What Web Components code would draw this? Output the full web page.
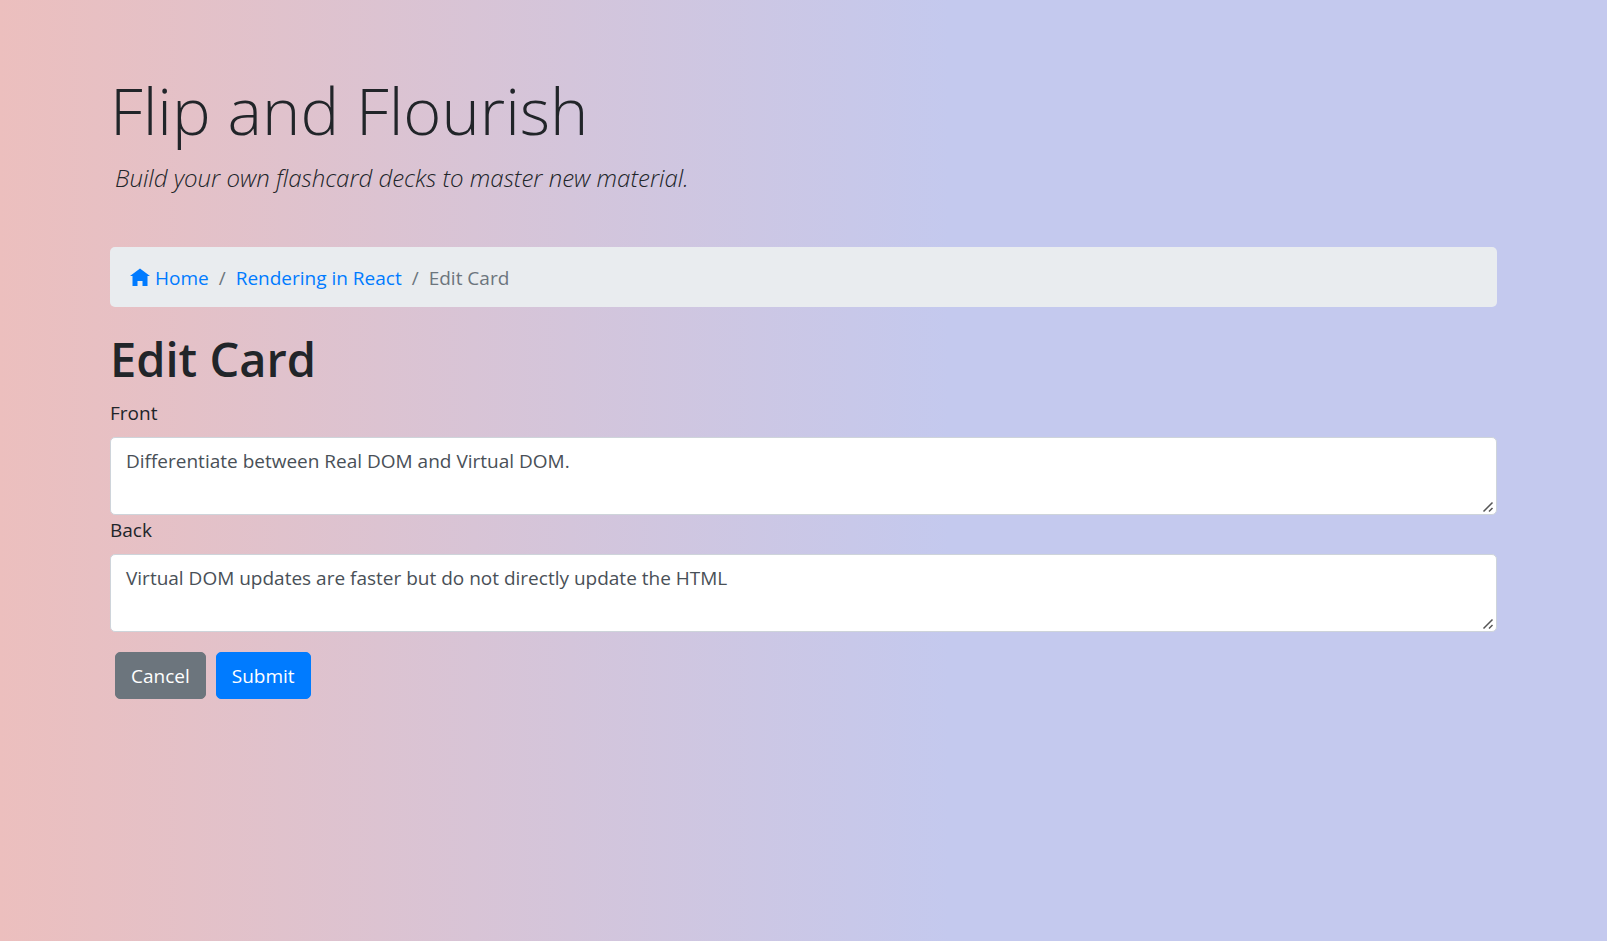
<!DOCTYPE html>
<html lang="en">
<head>
<meta charset="utf-8">
<title>Flip and Flourish</title>
<style>
  html { min-height: 100%; background: linear-gradient(to right, #ecbfbe, #c4c9ee 59%); }
  body {
    margin: 0;
    color: #212529;
    font: 400 19px/30px "Segoe UI", "Open Sans", "Noto Sans", sans-serif;
  }
</style>
</head>
<body>
<flash-app>
  <site-header>
    <span slot="title">Flip and Flourish</span>
    <span slot="lead">Build your own flashcard decks to master new material.</span>
  </site-header>
  <bread-crumb>
    <crumb-item href="#home" icon>Home</crumb-item>
    <crumb-item href="#deck">Rendering in React</crumb-item>
    <crumb-item>Edit Card</crumb-item>
  </bread-crumb>
  <card-form heading="Edit Card">
    <text-field label="Front">Differentiate between Real DOM and Virtual DOM.</text-field>
    <text-field label="Back">Virtual DOM updates are faster but do not directly update the HTML</text-field>
    <action-button slot="actions" kind="secondary">Cancel</action-button>
    <action-button slot="actions" kind="primary">Submit</action-button>
  </card-form>
</flash-app>
<script>
const define = (name, render) => customElements.define(name, class extends HTMLElement {
  connectedCallback() {
    if (!this.shadowRoot) this.attachShadow({ mode: "open" }).innerHTML = render(this);
  }
});

define("flash-app", () => `
  <style>
    :host { display: block; padding: 68px 20px 20px; }
    main { max-width: 1387px; margin: 0 auto; }
  </style>
  <main><slot></slot></main>`);

define("site-header", () => `
  <style>
    :host { display: block; margin-bottom: 50px; }
    h1 { margin: 0 0 7px; font-size: 65px; line-height: 84px; font-weight: 300; }
    p { margin: 0; padding-left: 5px; font-size: 24px; line-height: 38px; font-weight: 300; font-style: italic; }
  </style>
  <header>
    <h1><slot name="title"></slot></h1>
    <p><slot name="lead"></slot></p>
  </header>`);

define("bread-crumb", () => `
  <style>
    :host { display: block; margin-bottom: 20px; }
    nav { display: flex; flex-wrap: wrap; padding: 16px 20px 14px; background: #e9ecef; border-radius: 5px; }
  </style>
  <nav aria-label="breadcrumb"><slot></slot></nav>`);

define("crumb-item", el => {
  const icon = el.hasAttribute("icon")
    ? `<svg viewBox="0 0 8 8" width="20" height="20" aria-hidden="true"><path d="M4 .2l-4 3h1v4h2v-2h2v2h2v-4.030l1 .030-4-3z"/></svg>`
    : "";
  return `
  <style>
    :host { display: flex; color: #6c757d; }
    :host(:not(:first-child))::before { content: "/"; padding: 0 10px; }
    a { display: flex; align-items: center; gap: 5px; color: #007bff; text-decoration: none; }
    svg { fill: currentColor; }
  </style>
  ${el.hasAttribute("href")
    ? `<a href="${el.getAttribute("href")}">${icon}<slot></slot></a>`
    : `<span aria-current="page"><slot></slot></span>`}`;
});

define("card-form", el => `
  <style>
    :host { display: block; }
    h2 { margin: 0 0 7px; font-size: 47px; line-height: 64px; font-weight: 600; }
    .actions { display: flex; gap: 10px; padding: 20px 5px 0; }
  </style>
  <form>
    <h2>${el.getAttribute("heading")}</h2>
    <slot></slot>
    <div class="actions"><slot name="actions"></slot></div>
  </form>`);

define("text-field", el => `
  <style>
    :host { display: block; }
    label { display: block; margin-bottom: 9px; }
    textarea {
      display: block; box-sizing: border-box; width: 100%; height: 78px; margin: 0;
      padding: 8px 15px; border: 1px solid #ced4da; border-radius: 5px;
      background: #fff; color: #495057; font: inherit; resize: vertical;
    }
    textarea::-webkit-resizer {
      background: url("data:image/svg+xml,%3Csvg xmlns='http://www.w3.org/2000/svg' viewBox='0 0 15 15'%3E%3Cpath d='M2.500 12.500l9-9M8 12.500l3.500-3.500' stroke='%23555' stroke-width='1.500'/%3E%3C/svg%3E") center / 15px 15px no-repeat;
    }
  </style>
  <label for="field">${el.getAttribute("label")}</label>
  <textarea id="field">${el.textContent.trim()}</textarea>`);

define("action-button", el => `
  <style>
    :host { display: block; }
    button {
      display: block; margin: 0; padding: 8px 15px 7px; border: 1px solid #6c757d; border-radius: 5px;
      background: #6c757d; color: #fff; font: inherit; cursor: pointer;
    }
    .primary { background: #007bff; border-color: #007bff; }
  </style>
  <button type="button" class="${el.getAttribute("kind")}"><slot></slot></button>`);
</script>
</body>
</html>
